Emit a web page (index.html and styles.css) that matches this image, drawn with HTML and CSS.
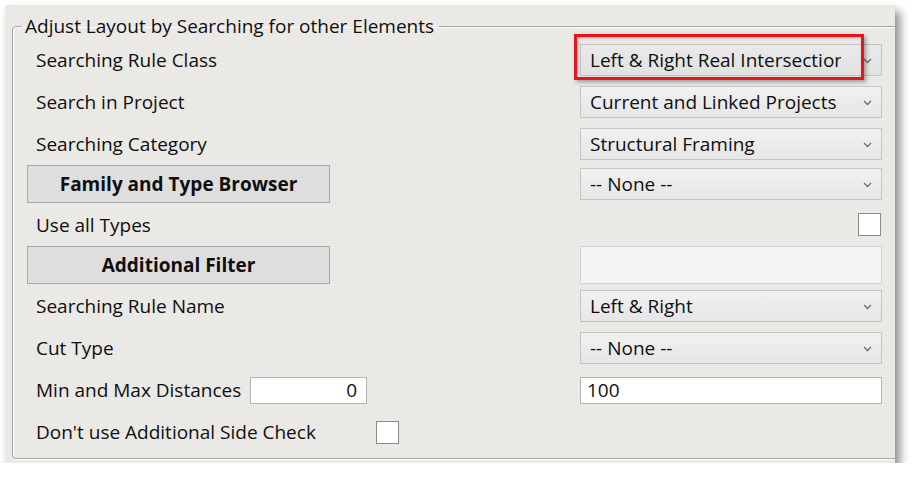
FILE: index.html
```html
<!DOCTYPE html>
<html>
<head>
<meta charset="utf-8">
<link rel="stylesheet" href="styles.css">
</head>
<body>
<div class="panel">
  <fieldset class="group">
    <legend class="group-title">Adjust Layout by Searching for other Elements</legend>
    <div class="form">
      <div class="label">Searching Rule Class</div>
      <div class="cell">
        <div class="combo highlighted"><span class="combo-text clip">Left &amp; Right Real Intersection</span><svg class="chev" width="9" height="6" viewBox="0 0 9 6"><polyline points="1,1 4.5,4.5 8,1" fill="none" stroke="#6a6a6a" stroke-width="1.3"/></svg></div>
        <div class="red-mark"></div>
      </div>

      <div class="label">Search in Project</div>
      <div class="cell">
        <div class="combo"><span class="combo-text">Current and Linked Projects</span><svg class="chev" width="9" height="6" viewBox="0 0 9 6"><polyline points="1,1 4.5,4.5 8,1" fill="none" stroke="#6a6a6a" stroke-width="1.3"/></svg></div>
      </div>

      <div class="label">Searching Category</div>
      <div class="cell">
        <div class="combo"><span class="combo-text">Structural Framing</span><svg class="chev" width="9" height="6" viewBox="0 0 9 6"><polyline points="1,1 4.5,4.5 8,1" fill="none" stroke="#6a6a6a" stroke-width="1.3"/></svg></div>
      </div>

      <div class="btn-cell"><button class="btn">Family and Type Browser</button></div>
      <div class="cell">
        <div class="combo"><span class="combo-text">-- None --</span><svg class="chev" width="9" height="6" viewBox="0 0 9 6"><polyline points="1,1 4.5,4.5 8,1" fill="none" stroke="#6a6a6a" stroke-width="1.3"/></svg></div>
      </div>

      <div class="label">Use all Types</div>
      <div class="cell end"><span class="check"></span></div>

      <div class="btn-cell"><button class="btn">Additional Filter</button></div>
      <div class="cell"><div class="disabled-box"></div></div>

      <div class="label">Searching Rule Name</div>
      <div class="cell">
        <div class="combo"><span class="combo-text">Left &amp; Right</span><svg class="chev" width="9" height="6" viewBox="0 0 9 6"><polyline points="1,1 4.5,4.5 8,1" fill="none" stroke="#6a6a6a" stroke-width="1.3"/></svg></div>
      </div>

      <div class="label">Cut Type</div>
      <div class="cell">
        <div class="combo"><span class="combo-text">-- None --</span><svg class="chev" width="9" height="6" viewBox="0 0 9 6"><polyline points="1,1 4.5,4.5 8,1" fill="none" stroke="#6a6a6a" stroke-width="1.3"/></svg></div>
      </div>

      <div class="label inline"><span class="min-label">Min and Max Distances</span><span class="textbox small right">0</span></div>
      <div class="cell"><span class="textbox wide">100</span></div>

      <div class="label inline"><span class="side-label">Don't use Additional Side Check</span><span class="check"></span></div>
      <div class="cell"></div>
    </div>
  </fieldset>
</div>
</body>
</html>
```

FILE: styles.css
```css
html, body {
  margin: 0;
  padding: 0;
  background: #ffffff;
}

body {
  font-family: "Open Sans", "Noto Sans", "Liberation Sans", sans-serif;
  font-size: 19px;
  color: #0f0f0f;
}

.panel {
  margin: 5px 0 0 5px;
  width: 890px;
  height: 458px;
  background: #ebe9e6;
  overflow: hidden;
  box-shadow: 5px 6px 9px rgba(0, 0, 0, 0.45);
  position: relative;
}

.group {
  margin: 9px 0 0 7px;
  padding: 1px 40px 5px 14px;
  width: 920px;
  box-sizing: border-box;
  border: 1px solid #a3a3a3;
  border-radius: 4px;
  box-shadow: inset 1px 1px 0 #ffffff, 1px 1px 0 #ffffff;
  min-width: 0;
}

.group-title {
  margin-left: -5px;
  padding: 0 5px 0 3px;
  line-height: 24px;
  height: 24px;
}

.form {
  display: grid;
  grid-template-columns: 553px 302px;
  grid-template-rows: 42px 42px 41px 40px 41px 40px 42px 42px 42px 42px;
  width: 855px;
}

.label {
  display: flex;
  align-items: center;
  padding-left: 9px;
  white-space: nowrap;
}

.cell {
  display: flex;
  align-items: center;
  position: relative;
}

.cell.end {
  justify-content: flex-end;
  padding-right: 1px;
}

.btn-cell {
  display: flex;
  align-items: center;
}

.btn {
  width: 303px;
  height: 38px;
  background: #dedede;
  border: 1px solid #a9a9a9;
  font-family: inherit;
  font-size: 19px;
  font-weight: 700;
  color: #0f0f0f;
  padding: 0;
}

.combo {
  width: 302px;
  height: 32px;
  box-sizing: border-box;
  border: 1px solid #c4c4c4;
  background: linear-gradient(#f1f1f1, #e6e6e6);
  display: flex;
  align-items: center;
  padding-left: 9px;
  position: relative;
}

.combo-text {
  width: 258px;
  overflow: hidden;
  white-space: nowrap;
}

.combo-text.clip {
  width: 251px;
}

.chev {
  position: absolute;
  right: 9px;
  top: 13px;
}

.highlighted {
  background: linear-gradient(#e9e9e9, #e2e2e2);
}

.red-mark {
  position: absolute;
  left: -6px;
  width: 290px;
  height: 46px;
  box-sizing: border-box;
  border: 3px solid #e4161c;
  box-shadow: 2px 2px 4px rgba(0, 0, 0, 0.35), inset 1px 1px 3px rgba(0, 0, 0, 0.25);
  top: 50%;
  transform: translateY(-50%);
  margin-top: -3px;
}

.check {
  display: inline-block;
  width: 23px;
  height: 23px;
  box-sizing: border-box;
  border: 1px solid #8a8a8a;
  background: #ffffff;
}

.disabled-box {
  width: 302px;
  height: 38px;
  box-sizing: border-box;
  border: 1px solid #d2d2d2;
  background: #f4f4f4;
}

.inline .min-label {
  width: 214px;
}

.inline .side-label {
  width: 340px;
}

.textbox {
  display: inline-flex;
  align-items: center;
  height: 27px;
  box-sizing: border-box;
  border: 1px solid #b5b5b5;
  background: #ffffff;
  padding: 0 9px;
}

.textbox.small {
  width: 117px;
  justify-content: flex-end;
}

.textbox.wide {
  width: 302px;
  padding-left: 6px;
}
```
